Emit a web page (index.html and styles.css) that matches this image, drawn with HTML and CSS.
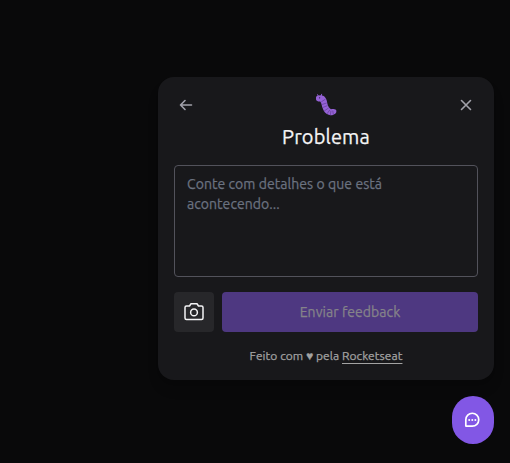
FILE: index.html
```html
<!DOCTYPE html>
<html lang="pt-BR">
<head>
<meta charset="utf-8">
<title>Feedback</title>
<link rel="stylesheet" href="styles.css">
</head>
<body>
<main class="widget">
  <section class="card">
    <header class="header">
      <button class="icon-button" aria-label="Voltar">
        <svg width="16" height="16" viewBox="0 0 256 256"><path d="M216 128H40M112 56l-72 72 72 72"/></svg>
      </button>
      <h1 class="title">
        <svg class="bug" width="24" height="24" viewBox="0 0 24 24">
          <path class="bug-line" d="M4.600 3.500 3.600 1.700M7.300 3 7.600 1.300"/>
          <path class="bug-body" d="M2 4.200C2.500 2.800 4 2.500 5.300 2.500c2-.5 4.400.2 5.700 1.800 1.400 1.500 1.800 3.300 2.100 5 .4 2.400 1.200 4.800 2.900 6.300.7.700 1.300.8 2.200.5 1.800-.6 4 .1 4.200 1.700.1 2-1 3.400-2.700 3.600-1.600 1-3.700 1.200-5.100.4-3.200-1-5-3.600-6-6.800-.9-2.100-.8-4.500-2.400-6.600-1.600.3-3.700-.2-4.200-2Z"/>
          <path class="bug-stripes" d="m7.600 8.700 3.600-2.400M8.300 11.400l4-1.300M9 14.400l4.200-1.700M10.600 17.700l3.700-2.500M13.200 20.500l2.500-3.400M16.400 21.800l.5-3.600M19.300 21.200l-.5-3.200"/>
          <circle class="bug-eye" cx="5.600" cy="4.800" r=".65"/>
        </svg>
        <span>Problema</span>
      </h1>
      <button class="icon-button" aria-label="Fechar">
        <svg width="16" height="16" viewBox="0 0 256 256"><path d="M200 56 56 200M200 200 56 56"/></svg>
      </button>
    </header>
    <textarea class="comment" placeholder="Conte com detalhes o que está acontecendo..."></textarea>
    <div class="actions">
      <button class="camera" aria-label="Capturar tela">
        <svg width="24" height="24" viewBox="0 0 256 256"><path d="M208 208H48a16 16 0 0 1-16-16V80a16 16 0 0 1 16-16h32l16-24h64l16 24h32a16 16 0 0 1 16 16v112a16 16 0 0 1-16 16Z"/><circle cx="128" cy="132" r="36"/></svg>
      </button>
      <button class="submit" disabled>Enviar feedback</button>
    </div>
    <footer class="footer">Feito com <span class="heart">♥</span> pela <a class="link" href="#">Rocketseat</a></footer>
  </section>
  <button class="launcher" aria-label="Abrir feedback">
    <svg width="18" height="18" viewBox="0 0 256 256"><path d="M132 216H47.700a7.600 7.600 0 0 1-7.700-7.700V124a92 92 0 0 1 92-92 92 92 0 0 1 92 92 92 92 0 0 1-92 92Z"/><g class="dots"><circle cx="88" cy="128" r="14"/><circle cx="132" cy="128" r="14"/><circle cx="176" cy="128" r="14"/></g></svg>
  </button>
</main>
</body>
</html>
```
FILE: styles.css
```css
* { box-sizing: border-box; }

body {
  margin: 0;
  height: 100vh;
  overflow: hidden;
  background: #09090a;
  color: #f4f4f5;
  font-family: Ubuntu, "Noto Sans", sans-serif;
  -webkit-text-stroke: 0.25px;
}

button { border: 0; padding: 0; font: inherit; letter-spacing: inherit; color: inherit; background: none; }
svg { display: block; fill: none; stroke: currentColor; stroke-width: 16; stroke-linecap: round; stroke-linejoin: round; }

.widget {
  height: 100%;
  padding: 0 16px 19px 0;
  display: flex;
  flex-direction: column;
  justify-content: flex-end;
  align-items: flex-end;
  gap: 16px;
}

.card {
  width: 336px;
  height: 303px;
  padding: 16px;
  border-radius: 16px;
  background: #18181b;
  box-shadow: 0 10px 15px -3px rgb(0 0 0 / 10%), 0 4px 6px -4px rgb(0 0 0 / 10%);
}

.header { display: flex; justify-content: space-between; align-items: flex-start; height: 72px; }
.icon-button { width: 24px; height: 24px; display: grid; place-items: center; color: #a1a1aa; }
.icon-button svg { stroke-width: 26; }

.title {
  margin: 0;
  display: flex;
  flex-direction: column;
  align-items: center;
  gap: 6px;
  font-size: 20px;
  line-height: 28px;
  font-weight: 400;
  letter-spacing: 0.15px;
}
.bug { stroke: none; }
.bug-body { fill: #9562d6; }
.bug-line { stroke: #8c5bd0; stroke-width: 1; }
.bug-stripes { stroke: #67419c; stroke-width: .8; }
.bug-eye { fill: #2c2040; }

.comment {
  display: block;
  width: 100%;
  height: 112px;
  padding: 8px 12px;
  resize: none;
  border: 1px solid #52525b;
  border-radius: 4px;
  background: transparent;
  color: #f4f4f5;
  font: 14px/20px Ubuntu, "Noto Sans", sans-serif;
  letter-spacing: 0.06px;
}
.comment::placeholder { color: #6b7280; }

.actions { display: flex; gap: 8px; margin-top: 15px; }
.camera { width: 40px; height: 40px; display: grid; place-items: center; border-radius: 4px; background: #27272a; }
.submit { flex: 1; border-radius: 4px; background: #4e3881; color: #858389; font-size: 14px; line-height: 20px; letter-spacing: 0.06px; }

.footer { margin-top: 16px; text-align: center; font-size: 12px; line-height: 16px; color: #a3a3a3; white-space: nowrap; letter-spacing: 0.05px; }
.heart { font-family: "Liberation Sans", sans-serif; }
.link { color: inherit; text-decoration: underline; text-underline-offset: 3px; }

.launcher { width: 42px; height: 48px; padding-right: 2px; display: grid; place-items: center; border-radius: 24px; background: #8257e5; color: #fff; }
.launcher svg { stroke-width: 24; }
.dots { fill: currentColor; stroke: none; }
```
